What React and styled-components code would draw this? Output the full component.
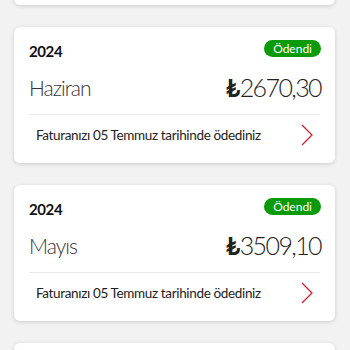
import React from "react";
import styled, { createGlobalStyle } from "styled-components";

const Global = createGlobalStyle`
  html, body { margin: 0; padding: 0; background: #f2f2f2; }
  body { font-family: "Lato", "Open Sans", sans-serif; color: #1f1f1f; overflow: hidden; }
`;

const Page = styled.div`
  display: flex;
  flex-direction: column;
  gap: 22px;
  padding: 0 15px 0 14px;
  margin-top: -131px;
`;

const Card = styled.div`
  background: #fff;
  border-radius: 6px;
  box-shadow: 0 1px 4px rgba(0, 0, 0, 0.16);
  padding: 15px 14px 7px 15px;
  display: flex;
  flex-direction: column;
  height: 136px;
  box-sizing: border-box;
`;

const TopRow = styled.div`
  display: flex;
  justify-content: space-between;
  align-items: center;
  height: 17px;
`;

const Year = styled.div`
  font-weight: 700;
  font-size: 15px;
  letter-spacing: -0.4px;
  color: #111;
`;

const Badge = styled.div`
  background: #0a9a0a;
  color: #fff;
  font-size: 12px;
  line-height: 17px;
  height: 17px;
  margin-top: -4px;
  padding: 0 9px;
  border-radius: 9px;
`;

const AmountRow = styled.div`
  display: flex;
  justify-content: space-between;
  align-items: center;
  margin-top: 14px;
  height: 28px;
`;

const Month = styled.div`
  font-size: 21px;
  font-weight: 300;
  letter-spacing: -1px;
  color: #333;
`;

const Amount = styled.div`
  font-size: 25px;
  font-weight: 300;
  letter-spacing: -1.6px;
  color: #222;
`;

const Lira = styled.span`
  font-weight: 700;
  margin-right: 1px;
`;

const Divider = styled.div`
  height: 1px;
  background: #ebebeb;
  margin-top: 13px;
  margin-right: 1px;
`;

const Footer = styled.div`
  display: flex;
  justify-content: space-between;
  align-items: center;
  height: 42px;
  padding-left: 7px;
  padding-right: 8px;
`;

const FooterText = styled.div`
  font-size: 13.5px;
  letter-spacing: -0.35px;
  color: #222;
`;

const Chevron = () => (
  <svg width="12" height="22" viewBox="0 0 12 22">
    <path d="M1 1 L11 11 L1 21" fill="none" stroke="#d3202e" strokeWidth="1.3" />
  </svg>
);

const bills = [
  { year: "2024", month: "Temmuz", amount: "3120,00" },
  { year: "2024", month: "Haziran", amount: "2670,30" },
  { year: "2024", month: "Mayıs", amount: "3509,10" },
  { year: "2024", month: "Nisan", amount: "2980,40" },
];

export default function App() {
  return (
    <>
      <Global />
      <Page>
        {bills.map((b, i) => (
          <Card key={i}>
            <TopRow>
              <Year>{b.year}</Year>
              <Badge>Ödendi</Badge>
            </TopRow>
            <AmountRow>
              <Month>{b.month}</Month>
              <Amount>
                <Lira>₺</Lira>
                {b.amount}
              </Amount>
            </AmountRow>
            <Divider />
            <Footer>
              <FooterText>Faturanızı 05 Temmuz tarihinde ödediniz</FooterText>
              <Chevron />
            </Footer>
          </Card>
        ))}
      </Page>
    </>
  );
}
